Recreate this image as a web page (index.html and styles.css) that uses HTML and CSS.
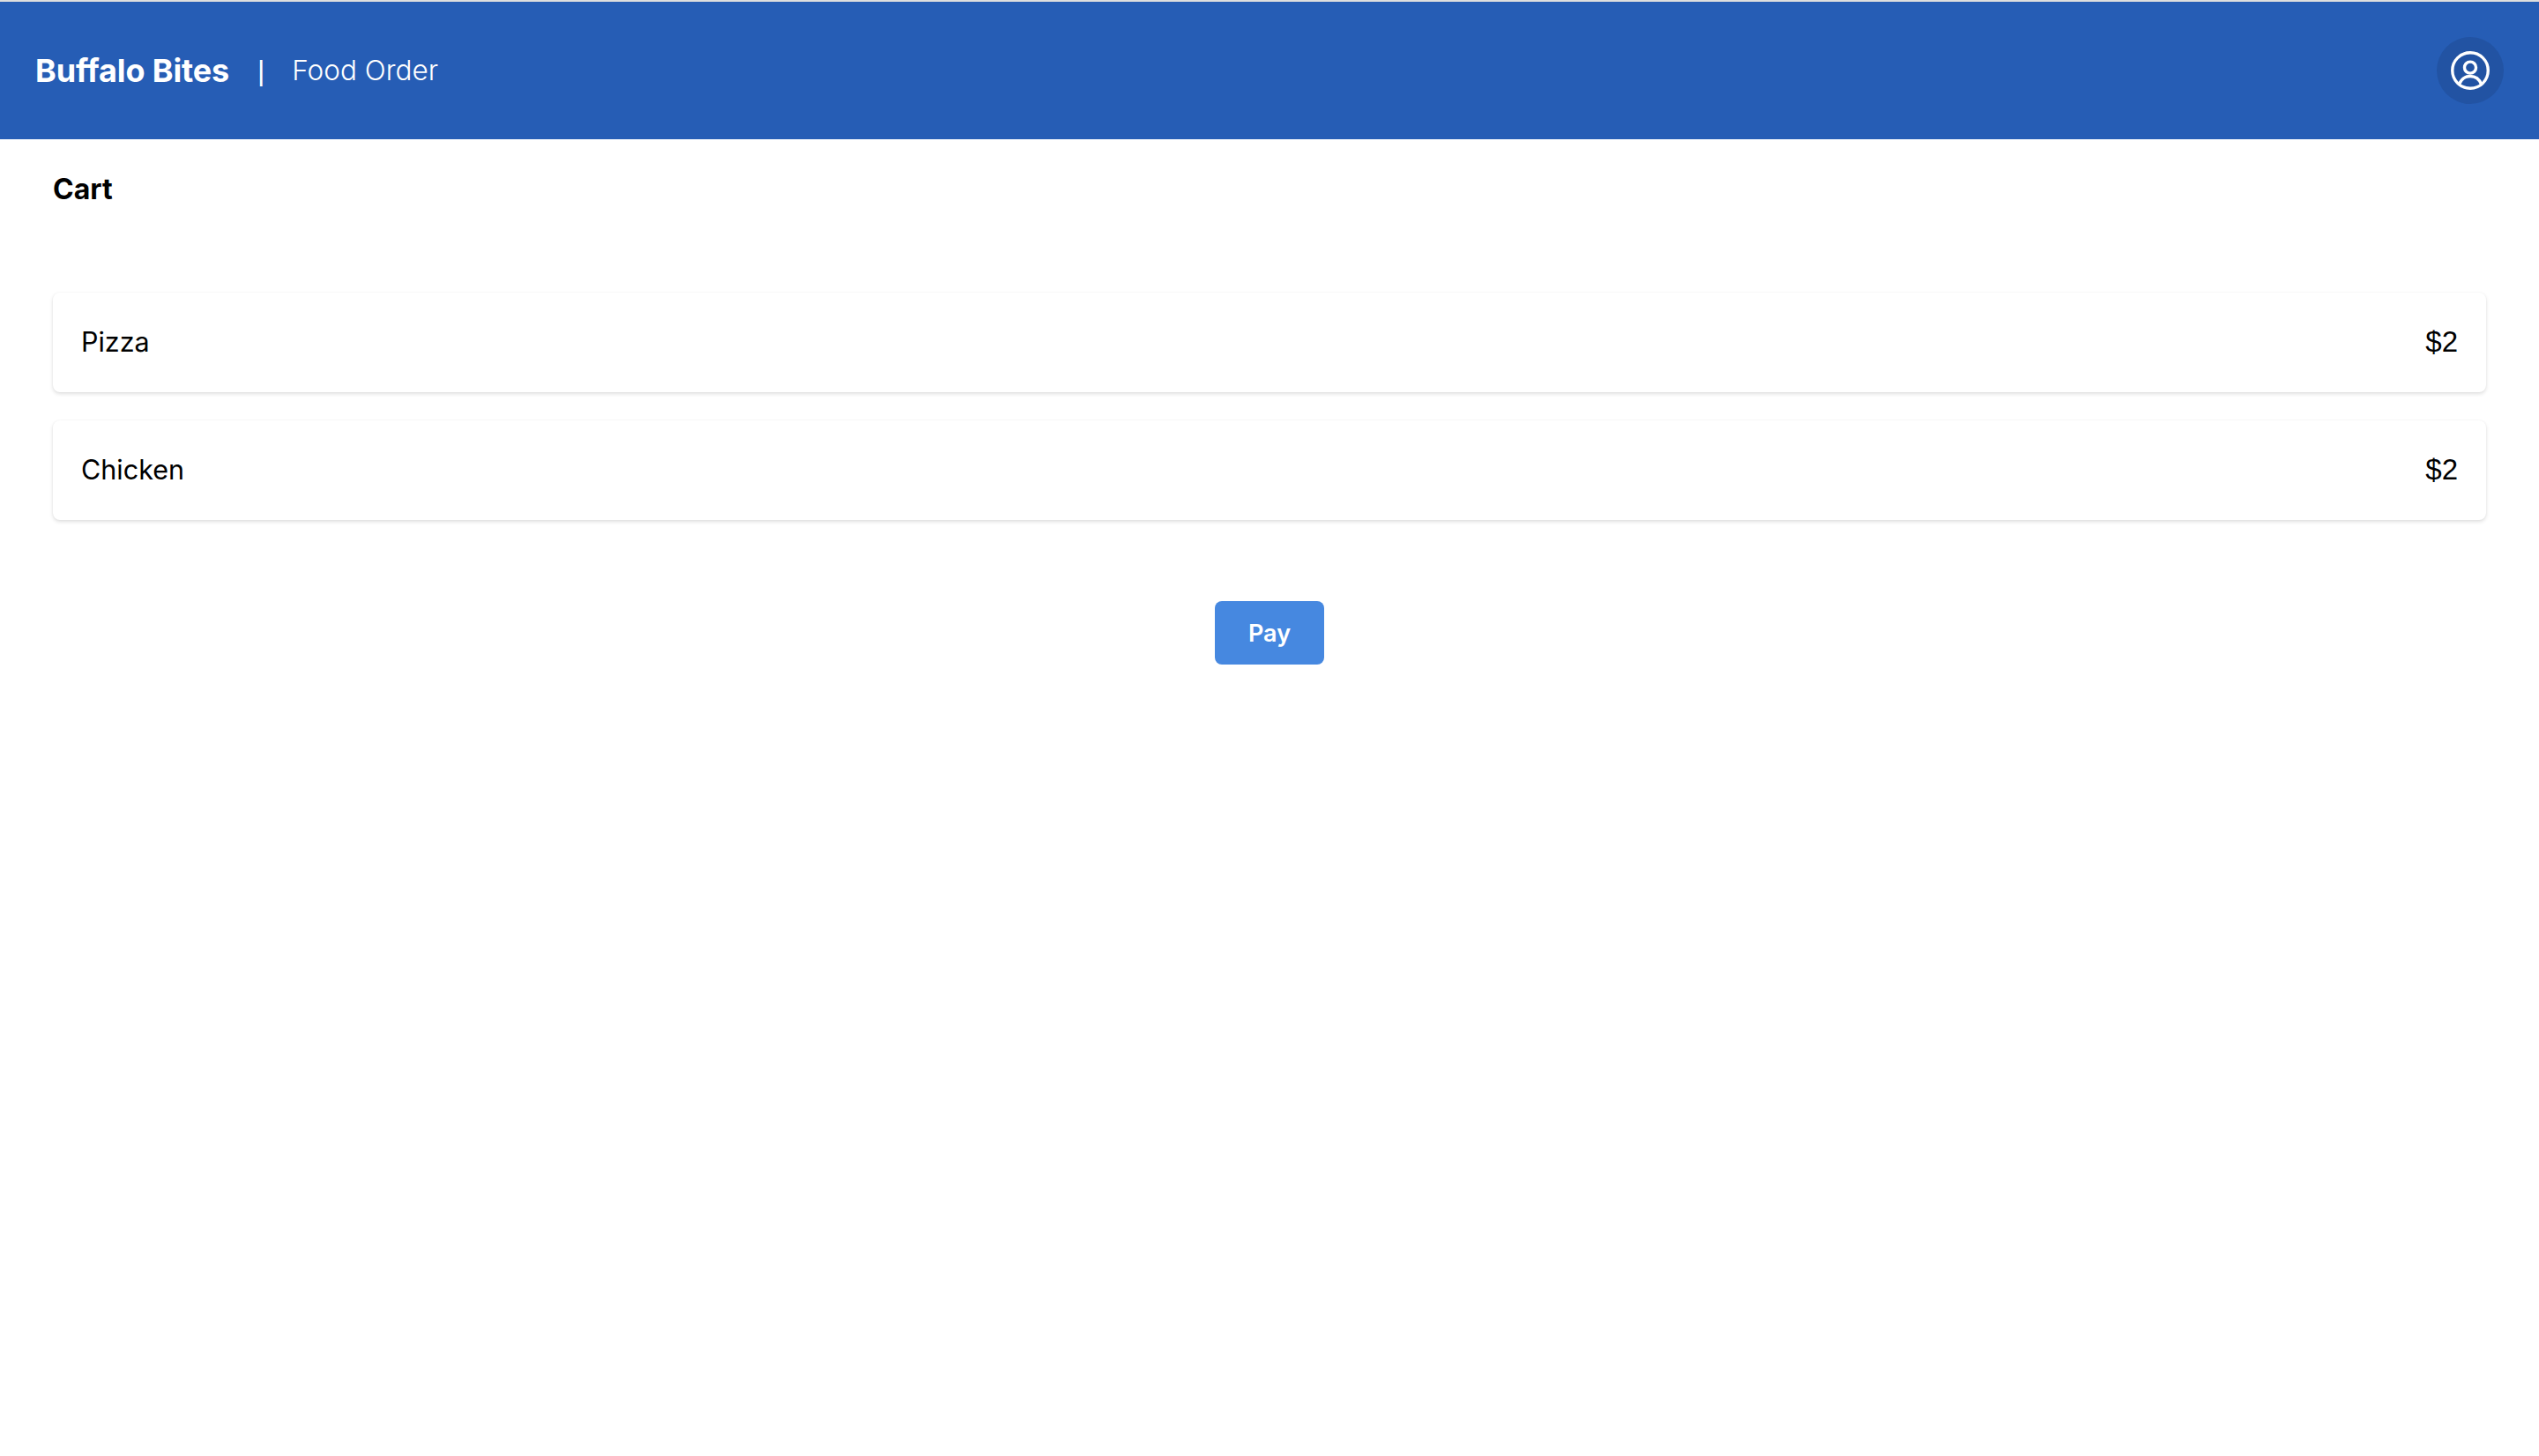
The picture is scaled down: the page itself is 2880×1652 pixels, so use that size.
FILE: index.html
```html
<!DOCTYPE html>
<html>
<head>
    <title>Buffalo Bites - Food Order</title>
    <link rel="stylesheet" href="styles.css">
</head>
<body>
    <header class="top-bar">
        <div class="brand">
            <span class="brand-name">Buffalo Bites</span>
            <span class="brand-divider">|</span>
            <span class="brand-page">Food Order</span>
        </div>
        <button class="avatar-btn" aria-label="Account">
            <svg class="avatar-icon" viewBox="0 0 24 24" fill="none" stroke="currentColor" stroke-width="1.5" stroke-linecap="round" stroke-linejoin="round">
                <circle cx="12" cy="12" r="9"/>
                <circle cx="12" cy="10.5" r="2.9"/>
                <path d="M6.4 19c1-2.6 3.2-4.1 5.6-4.1s4.6 1.5 5.6 4.1"/>
            </svg>
        </button>
    </header>
    <main class="cart">
        <h1 class="cart-title">Cart</h1>
        <div class="cart-list">
            <div class="cart-item">
                <span>Pizza</span>
                <span class="cart-price">$2</span>
            </div>
            <div class="cart-item">
                <span>Chicken</span>
                <span class="cart-price">$2</span>
            </div>
        </div>
        <div class="cart-actions">
            <button class="pay-btn">Pay</button>
        </div>
    </main>
</body>
</html>
```

FILE: styles.css
```css
* {
    box-sizing: border-box;
}
body {
    margin: 0;
    font-family: Inter, "Liberation Sans", sans-serif;
    background: #fff;
    color: #000;
}
.top-bar {
    display: flex;
    align-items: center;
    justify-content: space-between;
    height: 158px;
    padding: 0 40px;
    background: #265db5;
    border-top: 2px solid #dedede;
    color: #fff;
}
.brand {
    display: flex;
    align-items: center;
}
.brand-name {
    font-size: 36px;
    font-weight: 700;
    letter-spacing: -0.15px;
}
.brand-divider {
    margin: 0 31px 0 32px;
    font-family: "Liberation Sans", sans-serif;
    font-size: 32px;
}
.brand-page {
    margin-bottom: 2px;
    font-size: 31.5px;
    font-weight: 300;
}
.avatar-btn {
    display: flex;
    align-items: center;
    justify-content: center;
    width: 76px;
    height: 76px;
    padding: 0;
    border: none;
    border-radius: 50%;
    background: #2253a3;
    color: #fff;
}
.avatar-icon {
    width: 54px;
    height: 54px;
}
.cart {
    padding: 36px 60px;
}
.cart-title {
    margin: 0;
    font-size: 32px;
    line-height: 42px;
    font-weight: 700;
}
.cart-list {
    display: flex;
    flex-direction: column;
    gap: 32px;
    margin-top: 96px;
}
.cart-item {
    display: flex;
    align-items: center;
    justify-content: space-between;
    height: 113px;
    padding: 0 32px 2px;
    font-size: 30.5px;
    background: #fff;
    border-radius: 8px;
    box-shadow: 0 2px 4px rgba(0,0,0,0.13), 0 0 2px rgba(0,0,0,0.05);
}
.cart-price {
    font-family: "Liberation Sans", sans-serif;
    font-size: 33px;
}
.cart-actions {
    display: flex;
    justify-content: center;
    margin-top: 92px;
}
.pay-btn {
    width: 124px;
    height: 72px;
    padding: 0;
    border: none;
    border-radius: 8px;
    background: #4688e0;
    color: #fff;
    font-family: inherit;
    font-size: 27px;
    font-weight: 600;
}
```
